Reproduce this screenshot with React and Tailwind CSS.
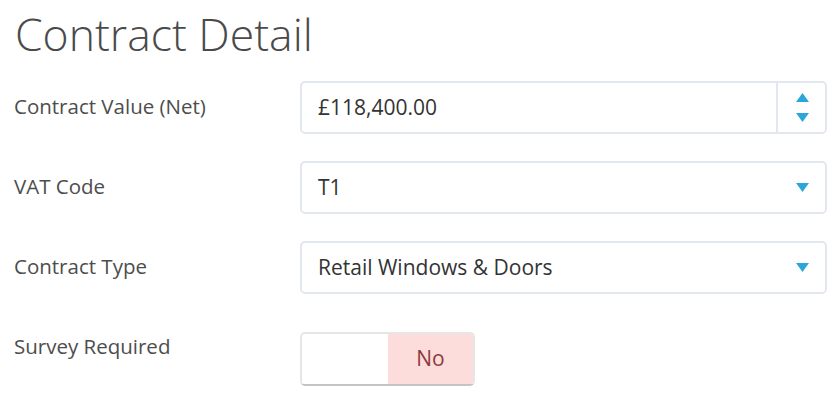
import { useState } from 'react'

function Caret({ up }) {
  return (
    <svg width="13" height="9" viewBox="0 0 13 9" className="block">
      {up ? <polygon points="6.5,0 13,9 0,9" fill="#2ba6da" /> : <polygon points="0,0 13,0 6.5,9" fill="#2ba6da" />}
    </svg>
  )
}

function Row({ label, children }) {
  return (
    <div className="flex items-start h-[80px]">
      <label className="w-[286px] pt-[11px] text-[20.5px] leading-[28px] text-[#4d4d4d]">{label}</label>
      <div className="w-[527px]">{children}</div>
    </div>
  )
}

export default function App() {
  const [value] = useState('£118,400.00')

  return (
    <div className="w-[837px] h-[400px] bg-white pl-[14px] font-['Open_Sans',sans-serif] overflow-hidden">
      <h1 className="pt-[4px] h-[81px] text-[44.5px] leading-[60px] font-light text-[#4a4a4a] pl-[1px]">Contract Detail</h1>

      <Row label="Contract Value (Net)">
        <div className="flex h-[53px] border-2 border-[#e3e7ef] rounded-[5px] bg-white">
          <div className="flex-1 flex items-center pl-[16px] text-[21px] text-[#333]">{value}</div>
          <div className="w-[49px] border-l-2 border-[#e3e7ef] flex flex-col items-center justify-center gap-[11px] pl-[2px]">
            <Caret up />
            <Caret />
          </div>
        </div>
      </Row>

      <Row label="VAT Code">
        <div className="flex items-center justify-between h-[53px] border-2 border-[#e3e7ef] rounded-[5px] bg-white pl-[16px] pr-[16px]">
          <span className="text-[21px] text-[#333]">T1</span>
          <Caret />
        </div>
      </Row>

      <Row label="Contract Type">
        <div className="flex items-center justify-between h-[53px] border-2 border-[#e3e7ef] rounded-[5px] bg-white pl-[16px] pr-[16px]">
          <span className="text-[21px] text-[#333]">Retail Windows &amp; Doors</span>
          <Caret />
        </div>
      </Row>

      <Row label="Survey Required">
        <div className="mt-[11px] flex w-[175px] h-[54px] border-2 border-[#e6e6e6] border-b-[#c4c4c4] rounded-[5px] overflow-hidden">
          <div className="w-[86px] bg-white" />
          <div className="flex-1 bg-[#fddcdc] flex items-center justify-center text-[21px] text-[#8f3a3a]">No</div>
        </div>
      </Row>
    </div>
  )
}
